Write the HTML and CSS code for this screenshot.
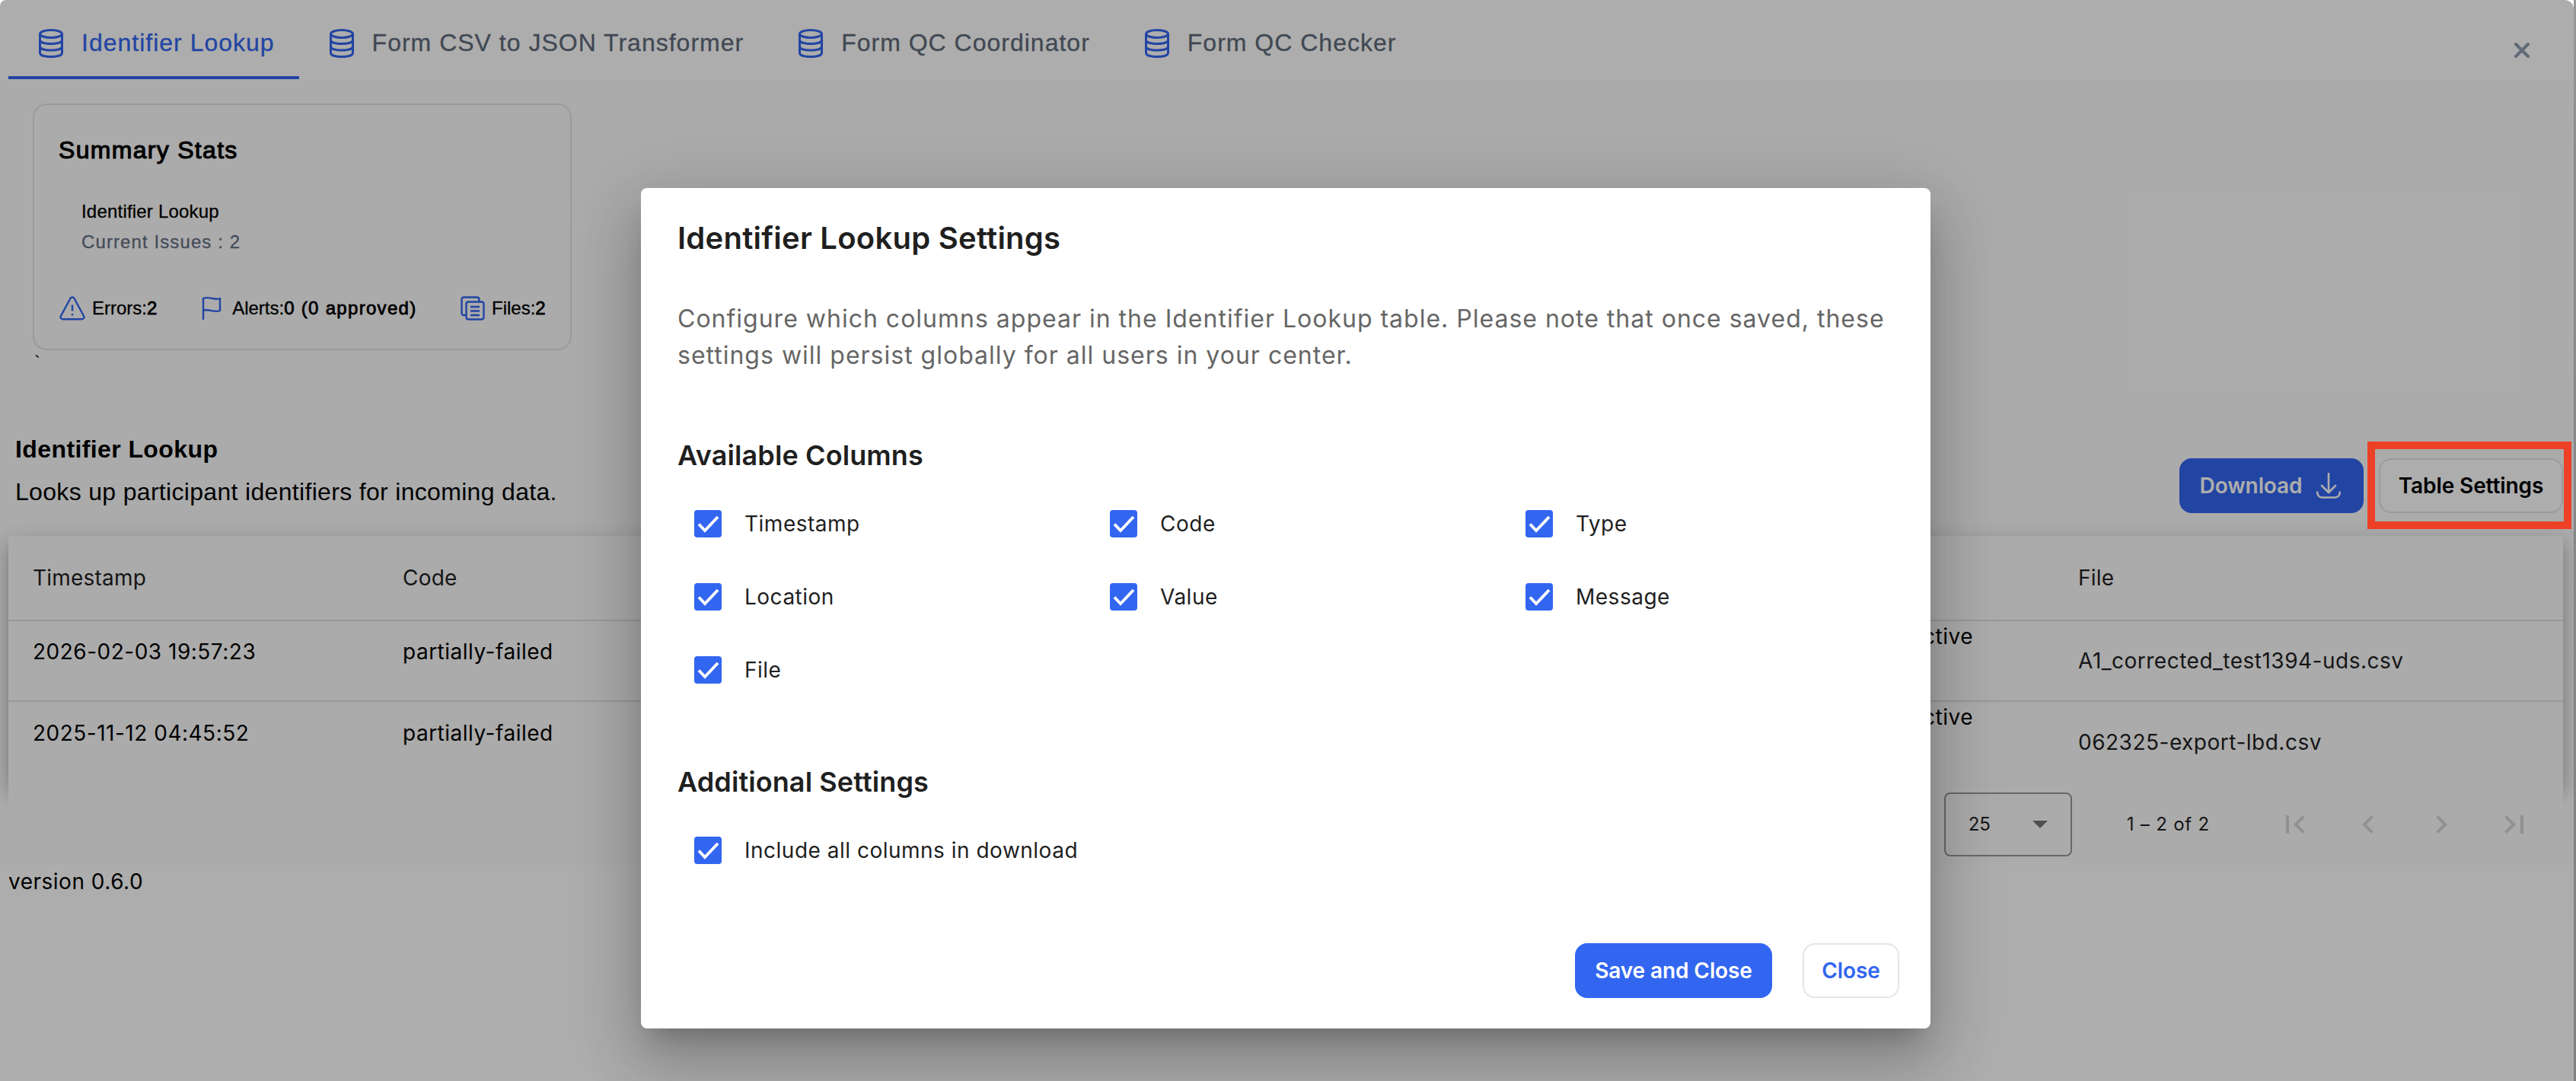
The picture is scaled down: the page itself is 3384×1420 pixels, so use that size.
FILE: index.html
```html
<!doctype html>
<html lang="en">
<head>
  <meta charset="UTF-8">
  <title>Identifier Lookup</title>
  <link rel="stylesheet" href="styles.css">
</head>
<body>
  <!-- icons -->
  <svg class="sprite">
    <symbol id="db" viewBox="0 0 32 40">
      <g fill="none" stroke="currentColor" stroke-width="3">
        <ellipse cx="16" cy="7.500" rx="14.500" ry="5"/>
        <path d="M1.500 7.500v25c0 3 6 5 14.500 5s14.500-2 14.500-5v-25"/>
        <path d="M1.500 15.500c0 3 6 5 14.500 5s14.500-2 14.500-5"/>
        <path d="M1.500 24c0 3 6 5 14.500 5s14.500-2 14.500-5"/>
      </g>
    </symbol>
    <symbol id="check" viewBox="0 0 36 36">
      <path d="M6 18.500l8 8.500L31 9" fill="none" stroke="#fff" stroke-width="3.900"/>
    </symbol>
  </svg>

  <div class="screen">
    <div class="app">
      <div class="tabs">
        <div class="tab active"><svg class="db"><use href="#db"/></svg>Identifier Lookup</div>
        <div class="tab"><svg class="db"><use href="#db"/></svg>Form CSV to JSON Transformer</div>
        <div class="tab"><svg class="db"><use href="#db"/></svg>Form QC Coordinator</div>
        <div class="tab"><svg class="db"><use href="#db"/></svg>Form QC Checker</div>
        <svg class="x" viewBox="0 0 20 20"><path d="M2 2l16 16M18 2L2 18"/></svg>
      </div>

      <div class="main">
        <div class="card">
          <h3>Summary Stats</h3>
          <div class="card_name">Identifier Lookup</div>
          <div class="card_issues">Current Issues : 2</div>
          <div class="stats">
            <div class="stat">
              <svg class="stat_icon" viewBox="0 0 34 32"><path d="M14.300 3.200L2 26c-1.200 2.300 0 4.200 2.500 4.200h25c2.500 0 3.700-1.900 2.500-4.200L19.700 3.200c-1.300-2.300-4.100-2.300-5.400 0zM17 11.500v8M17 23v2.500"/></svg>
              <span>Errors:<b>2</b></span>
            </div>
            <div class="stat">
              <svg class="stat_icon flag" viewBox="0 0 26 32"><path d="M2 31V3c7-3.500 15 3 22 0v16c-7 3.500-15-3-22 0"/></svg>
              <span>Alerts:<b>0 (0 approved)</b></span>
            </div>
            <div class="stat">
              <svg class="stat_icon files" viewBox="0 0 32 32"><path d="M7.500 25H4.500c-2 0-3-1-3-3V4.500c0-2 1-3 3-3h17c2 0 3 1 3 3V7M10.500 7.500h17c2 0 3 1 3 3v17c0 2-1 3-3 3h-17c-2 0-3-1-3-3v-17c0-2 1-3 3-3zM13 14h12M13 19.500h12M13 25h12"/></svg>
              <span>Files:<b>2</b></span>
            </div>
          </div>
        </div>
        <div class="tick">`</div>

        <div class="section">
          <div class="section_text">
            <h2>Identifier Lookup</h2>
            <p>Looks up participant identifiers for incoming data.</p>
          </div>
          <div class="section_btns">
            <button class="btn primary">Download
              <svg class="down" viewBox="0 0 32 34"><path d="M16 1v25M7 17l9 9 9-9M1.200 25.500c0 4 2.500 7 6.500 7h16.600c4 0 6.500-3 6.500-7"/></svg>
            </button>
            <button class="btn">Table Settings</button>
          </div>
        </div>

        <div class="table">
          <div class="row head">
            <div>Timestamp</div><div>Code</div><div></div><div></div><div></div><div></div><div>File</div>
          </div>
          <div class="row">
            <div class="up">2026-02-03 19:57:23</div><div class="up">partially-failed</div><div></div><div></div><div></div><div class="msg">active</div><div class="file_name">A1_corrected_test1394-uds.csv</div>
          </div>
          <div class="row">
            <div class="up">2025-11-12 04:45:52</div><div class="up">partially-failed</div><div></div><div></div><div></div><div class="msg">active</div><div class="file_name">062325-export-lbd.csv</div>
          </div>
        </div>

        <div class="paginator">
          <div class="select">25<i class="caret"></i></div>
          <span class="range">1 – 2 of 2</span>
          <div class="pages">
            <svg viewBox="0 0 24 24"><path d="M18.410 16.590L13.820 12l4.590-4.590L17 6l-6 6 6 6zM6 6h2v12H6z"/></svg>
            <svg viewBox="0 0 24 24"><path d="M15.410 7.410L14 6l-6 6 6 6 1.410-1.410L10.830 12z"/></svg>
            <svg viewBox="0 0 24 24"><path d="M10 6L8.590 7.410 13.170 12l-4.580 4.590L10 18l6-6z"/></svg>
            <svg viewBox="0 0 24 24"><path d="M5.590 7.410L10.180 12l-4.590 4.590L7 18l6-6-6-6zM16 6h2v12h-2z"/></svg>
          </div>
        </div>
      </div>
      <div class="version">version 0.6.0</div>
    </div>

    <div class="backdrop">
      <div class="dialog">
        <h1>Identifier Lookup Settings</h1>
        <p class="desc">Configure which columns appear in the Identifier Lookup table. Please note that once saved, these<br>settings will persist globally for all users in your center.</p>

        <h2 class="group">Available Columns</h2>
        <div class="checks">
          <label><svg class="box"><use href="#check"/></svg>Timestamp</label>
          <label><svg class="box"><use href="#check"/></svg>Code</label>
          <label><svg class="box"><use href="#check"/></svg>Type</label>
          <label><svg class="box"><use href="#check"/></svg>Location</label>
          <label><svg class="box"><use href="#check"/></svg>Value</label>
          <label><svg class="box"><use href="#check"/></svg>Message</label>
          <label><svg class="box"><use href="#check"/></svg>File</label>
        </div>

        <h2 class="group second">Additional Settings</h2>
        <div class="checks one">
          <label><svg class="box"><use href="#check"/></svg>Include all columns in download</label>
        </div>

        <div class="actions">
          <button class="btn primary save">Save and Close</button>
          <button class="btn close">Close</button>
        </div>
      </div>
    </div>

    <div class="highlight"></div>
  </div>
  <div class="edge"></div>
</body>
</html>
```
FILE: styles.css
```css
body, h1, h2, h3, p {
  margin: 0;
  padding: 0;
}

body {
  display: flex;
  width: 3384px;
  height: 1420px;
  overflow: hidden;
  background: #fff;
  font-family: Inter, "Liberation Sans", sans-serif;
  font-size: 28px;
  color: #000;
}

* {
  box-sizing: border-box;
}

.sprite {
  display: none;
}

.screen {
  position: relative;
  width: 3381px;
  height: 1420px;
  border-radius: 8px 12px 0 0;
  overflow: hidden;
}

.edge {
  width: 3px;
  height: 1420px;
  background: linear-gradient(#989898, #8c8c8c 200px, #808080);
}

/* tabs */
.tabs {
  display: flex;
  height: 104px;
  padding-left: 11px;
}

.tab {
  display: flex;
  align-items: center;
  padding: 13px 32px 0 40px;
  border-bottom: 4px solid transparent;
  font-family: "Liberation Sans", sans-serif;
  font-size: 32px;
  letter-spacing: 1px;
  color: #616b7b;
  white-space: nowrap;
  -webkit-text-stroke: 0.3px;
}

.tab.active {
  color: #3366f0;
  border-color: #3366f0;
}

.db {
  width: 32px;
  height: 40px;
  margin-right: 24px;
  color: #3366f0;
}

.x {
  width: 20px;
  height: 20px;
  margin: 56px 58px 0 auto;
  fill: none;
  stroke: #8e9cb2;
  stroke-width: 4;
  stroke-linecap: round;
}

/* summary card */
.main {
  padding: 32px 14px 0 11px;
  background: #fdfdfd;
}

.card {
  width: 708px;
  height: 324px;
  margin-left: 32px;
  padding: 39px 31px 0;
  border: 2px solid #e4e4e9;
  border-radius: 18px;
  font: 24px/40px "Liberation Sans", sans-serif;
}

.card h3 {
  padding-left: 1px;
  font-size: 32px;
  font-weight: normal;
  letter-spacing: 1.3px;
  -webkit-text-stroke: 1.1px;
}

.card_name {
  margin: 41px 0 0 31px;
  letter-spacing: 0.2px;
  -webkit-text-stroke: 0.3px;
}

.card_issues {
  margin-left: 31px;
  letter-spacing: 1.1px;
  color: #667085;
  -webkit-text-stroke: 0.3px;
}

.stats {
  display: flex;
  justify-content: space-between;
  margin-top: 47px;
  padding-left: 2px;
  white-space: nowrap;
  -webkit-text-stroke: 0.3px;
}

.stat {
  display: flex;
  align-items: center;
}

.stat b {
  font-weight: normal;
  letter-spacing: 1.3px;
  -webkit-text-stroke: 0.8px;
}

.stat_icon {
  width: 34px;
  height: 32px;
  margin-right: 9px;
  fill: none;
  stroke: #3366f0;
  stroke-width: 2.4;
  stroke-linejoin: round;
}

.stat_icon.flag {
  width: 26px;
  margin-right: 14px;
}

.stat_icon.files {
  width: 32px;
}

.tick {
  height: 32px;
  margin-left: 34px;
  font: 24px/32px "Liberation Sans", sans-serif;
}

/* section header */
.section {
  display: flex;
  justify-content: space-between;
  align-items: flex-end;
  margin-top: 70px;
  padding-left: 9px;
}

.section_text {
  font: 32px/56px "Liberation Sans", sans-serif;
  letter-spacing: 0.32px;
}

.section_text h2 {
  font-size: 32px;
  font-weight: bold;
  letter-spacing: 0.4px;
}

.section_btns {
  display: flex;
  gap: 20px;
}

.btn {
  display: flex;
  align-items: center;
  justify-content: center;
  width: 242px;
  height: 72px;
  padding: 0;
  border: 2px solid #e4e4ea;
  border-radius: 16px;
  background: #fff;
  color: #000;
  font: 600 28px Inter, "Liberation Sans", sans-serif;
  letter-spacing: -0.1px;
  white-space: nowrap;
}

.btn.primary {
  border-color: #3366f0;
  background: #3366f0;
  color: #fff;
}

.down {
  width: 32px;
  height: 34px;
  margin: 0 3px 0 19px;
  fill: none;
  stroke: #fff;
  stroke-width: 2.6;
  stroke-linecap: round;
  stroke-linejoin: round;
}

/* table */
.table {
  height: 324px;
  margin-top: 30px;
  background: #fdfdfd;
  letter-spacing: 0.5px;
  box-shadow: 0 10px 10px -6px rgba(0,0,0,.2), 0 16px 20px 2px rgba(0,0,0,.14), 0 6px 28px 4px rgba(0,0,0,.12);
}

.row {
  display: grid;
  grid-template-columns: 486px 400px 300px 300px 300px 901px 1fr;
  align-items: center;
  height: 106px;
  padding-left: 32px;
  border-bottom: 2px solid #e0e0e0;
  line-height: 40px;
}

.row:last-child {
  border-bottom: 0;
}

.row.head {
  height: 112px;
  letter-spacing: 0.2px;
  color: #1f1f23;
}

.up {
  padding-bottom: 25px;
}

.msg {
  align-self: start;
  padding-right: 138px;
  text-align: right;
}

.file_name {
  color: #1f1f23;
}

.paginator {
  position: relative;
  display: flex;
  align-items: center;
  justify-content: flex-end;
  height: 109px;
  padding-right: 16px;
  background: #fdfdfd;
  color: #1f1f23;
  font-size: 24px;
}

.select {
  display: flex;
  align-items: center;
  justify-content: space-between;
  width: 168px;
  height: 84px;
  padding: 0 30px;
  border: 2px solid #989898;
  border-radius: 8px;
}

.caret {
  border: 10px solid transparent;
  border-top-color: #767679;
  border-bottom: 0;
}

.range {
  margin: 0 64px 0 72px;
  letter-spacing: 0.8px;
}

.pages {
  display: flex;
}

.pages svg {
  width: 48px;
  height: 48px;
  margin: 0 24px;
  fill: #d6d6d6;
}

.version {
  padding-left: 11px;
  line-height: 42px;
  letter-spacing: 0.5px;
}

/* dialog */
.backdrop {
  position: absolute;
  top: 0;
  left: 0;
  width: 100%;
  height: 100%;
  padding: 247px 0 0 842px;
  background: rgba(0,0,0,.32);
}

.dialog {
  width: 1694px;
  height: 1104px;
  padding: 34px 41px 0 48px;
  border-radius: 8px;
  background: #fff;
  color: #1f1f1f;
  box-shadow: 0 22px 30px -14px rgba(0,0,0,.2), 0 48px 76px 6px rgba(0,0,0,.14), 0 18px 92px 16px rgba(0,0,0,.12);
}

.dialog h1 {
  font-size: 40px;
  line-height: 64px;
  font-weight: 600;
  letter-spacing: 0.25px;
}

.desc {
  margin-top: 50px;
  font-size: 32px;
  line-height: 48px;
  letter-spacing: 1px;
  color: #666;
  white-space: nowrap;
}

.group {
  margin-top: 75px;
  font-size: 36px;
  line-height: 64px;
  font-weight: 600;
  letter-spacing: 0.1px;
}

.group.second {
  margin-top: 67px;
}

.checks {
  display: grid;
  grid-template-columns: 546px 546px 1fr;
  margin-top: 10px;
  letter-spacing: 0.5px;
}

.checks.one {
  grid-template-columns: 1fr;
}

.checks label {
  display: flex;
  align-items: center;
  height: 96px;
  padding-left: 22px;
}

.box {
  width: 36px;
  height: 36px;
  margin-right: 30px;
  border-radius: 4px;
  background: #3366f0;
}

.actions {
  display: flex;
  justify-content: flex-end;
  gap: 40px;
  margin-top: 74px;
}

.btn.save {
  width: 259px;
}

.btn.close {
  width: 127px;
  color: #3366f0;
}

/* marker round the settings button */
.highlight {
  position: absolute;
  left: 3110px;
  top: 580px;
  width: 268px;
  height: 115px;
  border: 10px solid #ec4126;
}
```
